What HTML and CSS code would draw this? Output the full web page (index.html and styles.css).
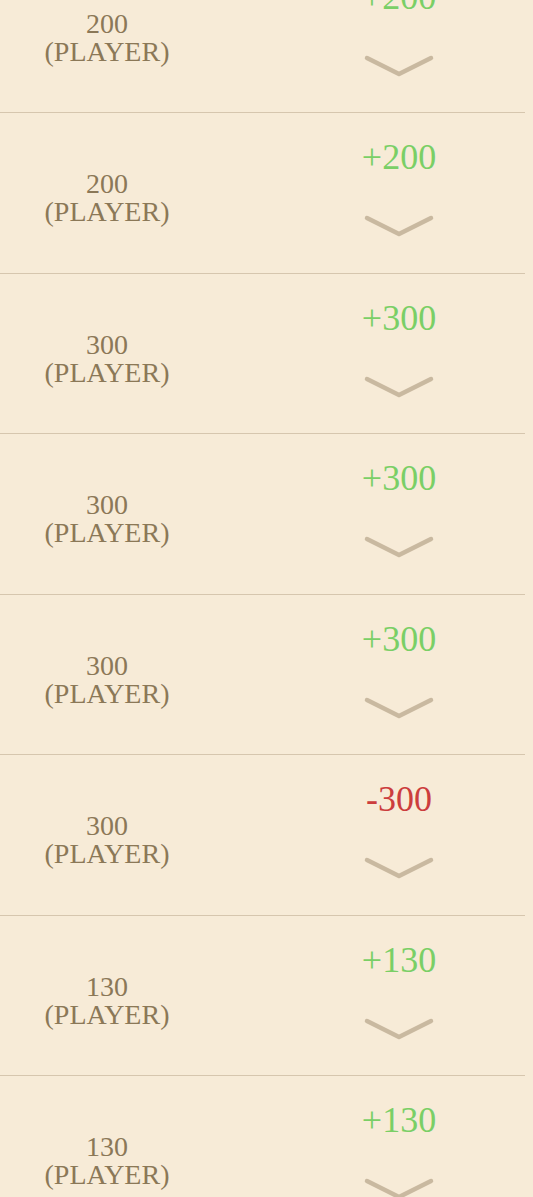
FILE: index.html
```html
<!DOCTYPE html>
<html lang="en">

<head>
    <meta charset="UTF-8">
    <meta name="viewport" content="width=device-width, initial-scale=1.0">
    <title>Bet History</title>
    <link rel="stylesheet" href="styles.css">
</head>

<body>
    <div class="list">
        <div class="row">
            <div class="bet">200<br>(PLAYER)</div>
            <div class="result">
                <span class="amount win">+200</span>
                <svg class="chevron" viewBox="0 0 72 26"><path d="M4 5 L36 21 L68 5"/></svg>
            </div>
        </div>
        <div class="row">
            <div class="bet">200<br>(PLAYER)</div>
            <div class="result">
                <span class="amount win">+200</span>
                <svg class="chevron" viewBox="0 0 72 26"><path d="M4 5 L36 21 L68 5"/></svg>
            </div>
        </div>
        <div class="row">
            <div class="bet">300<br>(PLAYER)</div>
            <div class="result">
                <span class="amount win">+300</span>
                <svg class="chevron" viewBox="0 0 72 26"><path d="M4 5 L36 21 L68 5"/></svg>
            </div>
        </div>
        <div class="row">
            <div class="bet">300<br>(PLAYER)</div>
            <div class="result">
                <span class="amount win">+300</span>
                <svg class="chevron" viewBox="0 0 72 26"><path d="M4 5 L36 21 L68 5"/></svg>
            </div>
        </div>
        <div class="row">
            <div class="bet">300<br>(PLAYER)</div>
            <div class="result">
                <span class="amount win">+300</span>
                <svg class="chevron" viewBox="0 0 72 26"><path d="M4 5 L36 21 L68 5"/></svg>
            </div>
        </div>
        <div class="row">
            <div class="bet">300<br>(PLAYER)</div>
            <div class="result">
                <span class="amount loss">-300</span>
                <svg class="chevron" viewBox="0 0 72 26"><path d="M4 5 L36 21 L68 5"/></svg>
            </div>
        </div>
        <div class="row">
            <div class="bet">130<br>(PLAYER)</div>
            <div class="result">
                <span class="amount win">+130</span>
                <svg class="chevron" viewBox="0 0 72 26"><path d="M4 5 L36 21 L68 5"/></svg>
            </div>
        </div>
        <div class="row">
            <div class="bet">130<br>(PLAYER)</div>
            <div class="result">
                <span class="amount win">+130</span>
                <svg class="chevron" viewBox="0 0 72 26"><path d="M4 5 L36 21 L68 5"/></svg>
            </div>
        </div>
    </div>
</body>

</html>
```

FILE: styles.css
```css
html, body {
    margin: 0;
    background-color: #f7ebd7;
    font-family: "Liberation Serif", "Times New Roman", serif;
}
.list {
    margin-top: -47.5px;
    margin-right: 8px;
}

.row {
    display: flex;
    height: 160.5px;
    box-sizing: border-box;
    border-bottom: 1px solid #d6c6ae;
}

.bet {
    width: 214px;
    padding-top: 57px;
    text-align: center;
    font-size: 28px;
    line-height: 28px;
    color: #8b7857;
}

.result {
    width: 140px;
    margin-left: 115px;
    padding-top: 24px;
    display: flex;
    flex-direction: column;
    align-items: center;
}
.amount {
    font-size: 36px;
    line-height: 40px;
}
.win {
    color: #7acf66;
}
.loss {
    color: #cc3d3d;
}

.chevron {
    width: 72px;
    height: 26px;
    margin-top: 36px;
    fill: none;
    stroke: #c9b9a0;
    stroke-width: 4.5;
    stroke-linecap: round;
    stroke-linejoin: round;
}
```
